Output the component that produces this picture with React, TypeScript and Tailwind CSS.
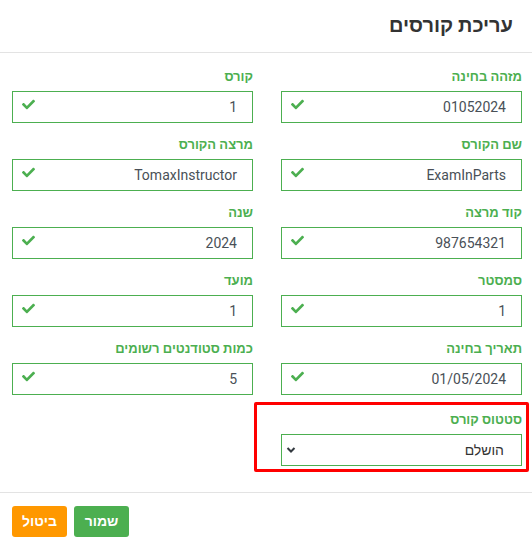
import React from 'react'

const fields = [
    { label: 'מזהה בחינה', value: '01052024' },
    { label: 'קורס', value: '1' },
    { label: 'שם הקורס', value: 'ExamInParts' },
    { label: 'מרצה הקורס', value: 'TomaxInstructor' },
    { label: 'קוד מרצה', value: '987654321' },
    { label: 'שנה', value: '2024' },
    { label: 'סמסטר', value: '1' },
    { label: 'מועד', value: '1' },
    { label: 'תאריך בחינה', value: '01/05/2024' },
    { label: 'כמות סטודנטים רשומים', value: '5' },
]

const Check = () => (
    <svg viewBox="0 0 512 512" className="w-[13px] h-[13px] fill-[#4caf50]">
        <path d="M173.9 439.4l-166.4-166.4c-10-10-10-26.2 0-36.2l36.2-36.2c10-10 26.2-10 36.2 0L192 312.7 432.1 72.6c10-10 26.2-10 36.2 0l36.2 36.2c10 10 10 26.2 0 36.2l-294.4 294.4c-10 10-26.2 10-36.2 0z" />
    </svg>
)

const Field = ({ label, value }: { label: string, value: string }) => (
    <div className="flex flex-col mb-[13px]">
        <label className="text-[13px] leading-[18px] font-bold text-[#4caf50] mb-[5px]">{label}</label>
        <div className="h-[32px] border border-[#4caf50] flex items-center justify-between pr-[15px] pl-[9px]">
            <span className="text-[14px] text-[#495057]">{value}</span>
            <span className="-mt-[5px]"><Check /></span>
        </div>
    </div>
)

const App = () => {
    return (
        <div dir="rtl" className="w-[532px] h-[548px] bg-white flex flex-col" style={{ fontFamily: "Roboto, 'Liberation Sans', sans-serif" }}>
            <div className="h-[53px] border-b border-[#e3e3e3] flex items-center pr-[19px] pb-[2px]">
                <h2 className="text-[20px] font-bold text-[#333]">עריכת קורסים</h2>
            </div>

            <div className="grid grid-cols-2 gap-x-[28px] pr-[10px] pl-[12px] pt-[15px] pb-[25px] border-b border-[#e3e3e3]">
                {fields.map((f, i) => (
                    <Field key={i} label={f.label} value={f.value} />
                ))}

                <div className="relative flex flex-col mt-[3px] mb-[1px]">
                    <div className="absolute -top-[9px] -bottom-[6px] -right-[7px] -left-[27px] border-[3px] border-[#ff0000] rounded-[2px]" />
                    <label className="text-[13px] leading-[18px] font-bold text-[#4caf50] mb-[5px]">סטטוס קורס</label>
                    <div className="h-[32px] border border-[#4caf50] flex items-center justify-between pr-[17px] pl-[4px]">
                        <span className="text-[14px] text-[#333]">הושלם</span>
                        <svg viewBox="0 0 20 20" className="w-[10px] h-[10px] fill-none stroke-[#343a40] stroke-[4]">
                            <path d="M3 6l7 7 7-7" />
                        </svg>
                    </div>
                </div>
            </div>

            <div className="flex justify-end gap-[7px] pl-[12px] pt-[13px]">
                <button className="w-[55px] h-[31px] rounded-[3px] bg-[#4caf50] text-white text-[14px] font-bold">שמור</button>
                <button className="w-[55px] h-[31px] rounded-[3px] bg-[#ff9800] text-white text-[14px] font-bold">ביטול</button>
            </div>
        </div>
    )
}

export default App
